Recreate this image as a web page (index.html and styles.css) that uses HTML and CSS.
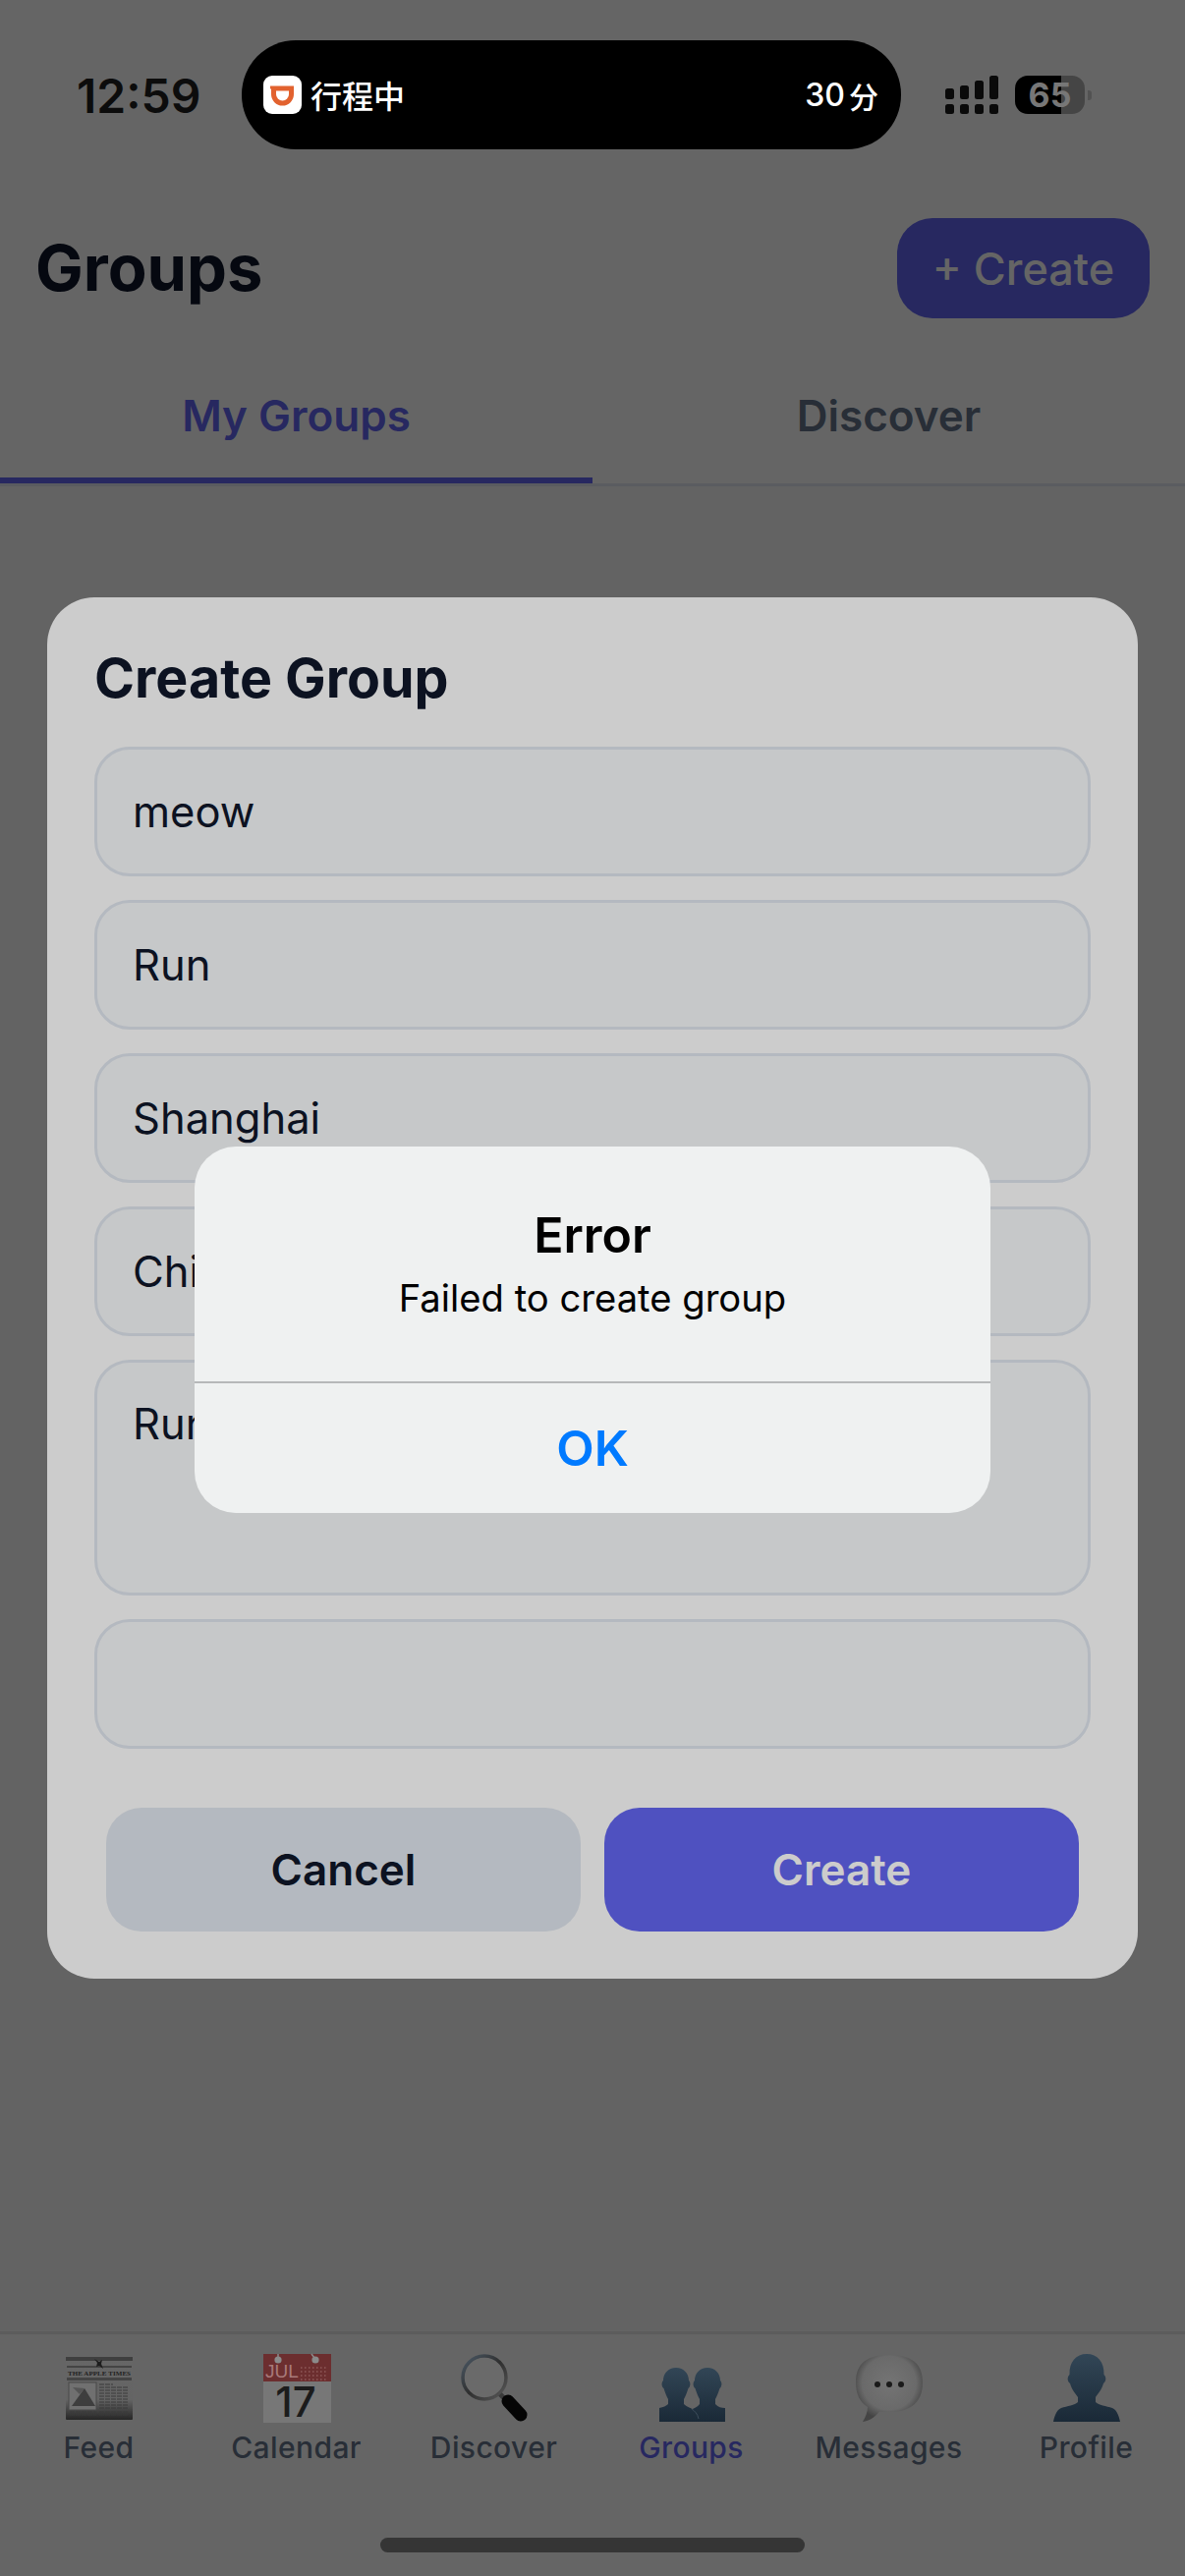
FILE: index.html
```html
<!DOCTYPE html>
<html lang="en">
<head>
<meta charset="utf-8">
<title>Groups</title>
<link rel="stylesheet" href="styles.css">
</head>
<body>
<div class="phone">
  <div class="screen">
    <header class="top">
      <div class="title-row">
        <h1 class="page-title">Groups</h1>
        <div class="add-btn">+ Create</div>
      </div>
      <div class="tabs">
        <div class="tab tab-on">My Groups</div>
        <div class="tab">Discover</div>
      </div>
    </header>
    <main class="content"></main>
    <nav class="nav">
      <div class="nav-item">
        <svg class="nav-icon" viewBox="0 0 72 72">
          <defs>
            <linearGradient id="paper" x1="0" y1="0" x2="0" y2="1">
              <stop offset="0" stop-color="#666666"/><stop offset=".68" stop-color="#646464"/><stop offset="1" stop-color="#262626"/>
            </linearGradient>
          </defs>
          <rect x="2" y="4" width="68" height="64" rx="1" fill="url(#paper)"/>
          <rect x="2" y="4" width="68" height="4" fill="#3f3f3f"/>
          <rect x="3" y="13" width="66" height="2" fill="#444444"/>
          <rect x="3" y="25" width="66" height="3" fill="#444444"/>
          <path d="M31 6l5 3 3-2-1 4 2 5-4-3-3 1 1-4z" fill="#1d1d1d"/>
          <text class="paper-head" x="36" y="23" text-anchor="middle" textLength="64">THE APPLE TIMES</text>
          <rect x="5" y="30" width="28" height="28" fill="#707070" stroke="#484848"/>
          <path d="M8 54 21 36l11 18z" fill="#3e3e3e"/>
          <path d="M9 35l12 1-5 6z" fill="#555"/>
          <g class="paper-lines">
            <path d="M36 32h14M36 35h30M36 38h30M36 41h30M36 44h30M36 47h30M36 50h30M36 53h30M36 56h30M6 60h27M36 60h30M6 63h27M36 63h30"/>
          </g>
        </svg>
        <span class="nav-label">Feed</span>
      </div>
      <div class="nav-item">
        <svg class="nav-icon" viewBox="0 0 72 72">
          <rect x="2" y="1" width="69" height="70" fill="#777777"/>
          <rect x="2" y="1" width="69" height="28" fill="#6c2e2f"/>
          <circle cx="17" cy="7" r="3.6" fill="#8b8b8b"/>
          <circle cx="55" cy="7" r="3.6" fill="#8b8b8b"/>
          <path d="M17 1v4M51 1l3 4" stroke="#8b8b8b" stroke-width="1.5"/>
          <text class="cal-month" x="4" y="25">JUL</text>
          <path class="cal-dots" d="M40 15h28M40 19h28M40 23h28M40 27h28"/>
          <text class="cal-day" x="35" y="65" text-anchor="middle">17</text>
        </svg>
        <span class="nav-label">Calendar</span>
      </div>
      <div class="nav-item">
        <svg class="nav-icon" viewBox="0 0 72 72">
          <defs>
            <linearGradient id="ring" x1="0" y1="0" x2="1" y2="1">
              <stop offset="0" stop-color="#4b5966"/><stop offset=".5" stop-color="#2f2f2f"/><stop offset="1" stop-color="#5a5a5a"/>
            </linearGradient>
          </defs>
          <circle cx="26" cy="25" r="22" fill="#6a6a6a" stroke="url(#ring)" stroke-width="3.5"/>
          <path d="M42 42l5 5" stroke="#3a3a3a" stroke-width="5"/>
          <path d="M50 49l13 14" stroke="#050505" stroke-width="13" stroke-linecap="round"/>
        </svg>
        <span class="nav-label">Discover</span>
      </div>
      <div class="nav-item">
        <svg class="nav-icon" viewBox="0 0 72 72">
          <defs>
            <linearGradient id="bust2" gradientUnits="userSpaceOnUse" x1="0" y1="15" x2="0" y2="70">
              <stop offset="0" stop-color="#324656"/><stop offset="1" stop-color="#1a2937"/>
            </linearGradient>
          </defs>
          <path fill="url(#bust2)" d="M20 15C28 15 33 21 33 28C35 30 35 34 32.500 36C31 41 29 45 28 47V52C31 55 36 56 38 58V70H3V56C7 55 10 54 12 52V47C11 45 9 41 7.500 36C5 34 5 30 7 28C7 21 12 15 20 15Z"/>
          <path fill="url(#bust2)" d="M52 15C60 15 65 21 65 28C67 30 67 34 64.500 36C63 41 61 45 60 47V52C63 55 66 56 70 56V70H35V58C38 56 42 55 44 52V47C43 45 41 41 39.500 36C37 34 37 30 39 28C39 21 44 15 52 15Z"/>
          <path d="M36 57c3 2 6 5 7 10" fill="none" stroke="#3d4e5c" stroke-width="1"/>
        </svg>
        <span class="nav-label nav-on">Groups</span>
      </div>
      <div class="nav-item">
        <svg class="nav-icon" viewBox="0 0 72 72">
          <defs>
            <radialGradient id="bubble" cx=".5" cy=".42" r=".56">
              <stop offset="0" stop-color="#747474"/><stop offset=".72" stop-color="#6a6a6a"/><stop offset="1" stop-color="#444444"/>
            </radialGradient>
          </defs>
          <path fill="url(#bubble)" d="M36 2C58 2 70 10 70 30C70 50 58 60 36 60C32 60 29 60 26 59.500C22 65 16 69 9 70C12 65 14 60 14 55C6 50 2 42 2 30C2 10 14 2 36 2Z"/>
          <circle cx="24" cy="32" r="3" fill="#1a1a1a"/>
          <circle cx="36" cy="32" r="3" fill="#1a1a1a"/>
          <circle cx="48" cy="32" r="3" fill="#1a1a1a"/>
        </svg>
        <span class="nav-label">Messages</span>
      </div>
      <div class="nav-item">
        <svg class="nav-icon" viewBox="0 0 72 72">
          <defs>
            <linearGradient id="bust1" x1="0" y1="0" x2="0" y2="1">
              <stop offset="0" stop-color="#324656"/><stop offset="1" stop-color="#1a2937"/>
            </linearGradient>
          </defs>
          <path fill="url(#bust1)" d="M36 1C47 1 54 9 53.500 22C56 24 56 29 53 31C51 38 47 42 45 45V50C48 53 56 54 62 56C67 58 69 65 70 70H2C3 65 5 58 10 56C16 54 24 53 27 50V45C25 42 21 38 19 31C16 29 16 24 18.500 22C18 9 25 1 36 1Z"/>
        </svg>
        <span class="nav-label">Profile</span>
      </div>
    </nav>
  </div>

  <div class="dim dim-modal">
    <section class="modal">
      <h2 class="modal-title">Create Group</h2>
      <div class="fields">
        <div class="field">meow</div>
        <div class="field">Run</div>
        <div class="field">Shanghai</div>
        <div class="field">China</div>
        <div class="field field-area">Running</div>
        <div class="field"></div>
      </div>
      <div class="actions">
        <div class="btn btn-cancel">Cancel</div>
        <div class="btn btn-create">Create</div>
      </div>
    </section>
  </div>

  <div class="dim dim-alert">
    <section class="alert">
      <div class="alert-body">
        <div class="alert-title">Error</div>
        <div class="alert-msg">Failed to create group</div>
      </div>
      <div class="alert-ok">OK</div>
    </section>
  </div>

  <div class="status">
    <span class="time">12:59</span>
    <div class="island">
      <div class="island-left">
        <svg class="didi" viewBox="0 0 39 39">
          <rect width="39" height="39" rx="9" fill="#fff"/>
          <path d="M7 10.500H31V19A11.500 11.500 0 0 1 8 19V13.500H7Z" fill="#e2622f"/>
          <path d="M13 15.500H26V19A6.500 6.500 0 0 1 13 19Z" fill="#fff"/>
        </svg>
        <span class="trip">行程中</span>
      </div>
      <div class="eta"><span class="eta-num">30</span><span class="eta-unit">分</span></div>
    </div>
    <svg class="signal" viewBox="0 0 54 39">
      <rect x="0" y="29" width="9" height="10" rx="2.500"/>
      <rect x="15" y="29" width="9" height="10" rx="2.500"/>
      <rect x="30" y="29" width="9" height="10" rx="2.500"/>
      <rect x="45" y="29" width="9" height="10" rx="2.500"/>
      <rect x="0" y="13" width="9" height="11" rx="2.500"/>
      <rect x="15" y="10" width="9" height="14" rx="2.500"/>
      <rect x="30" y="5" width="9" height="19" rx="2.500"/>
      <rect x="45" y="0" width="9" height="24" rx="2.500"/>
    </svg>
    <div class="battery"><span>65</span></div>
    <div class="battery-tip"></div>
  </div>
  <div class="home-bar"></div>
</div>
</body>
</html>
```
FILE: styles.css
```css
* { box-sizing: border-box; }
html, body { margin: 0; padding: 0; }
body { font-family: Inter, "Noto Sans", sans-serif; background: #666; }

.phone {
  position: relative;
  width: 1206px;
  height: 2622px;
  overflow: hidden;
}
.screen {
  width: 100%;
  height: 100%;
  display: flex;
  flex-direction: column;
  background: #f8f8f8;
}

/* Header */
.top { background: #fff; padding-top: 222px; }
.title-row {
  display: flex;
  justify-content: space-between;
  align-items: center;
  padding: 0 36px;
}
.page-title {
  margin: 0;
  font-size: 65px;
  font-weight: 700;
  line-height: 72px;
  color: #0f172a;
}
.add-btn {
  width: 257px;
  height: 102px;
  display: flex;
  align-items: center;
  justify-content: center;
  border-radius: 36px;
  background: #6366f1;
  color: #fff;
  font-size: 45px;
  font-weight: 500;
}
.tabs {
  display: flex;
  margin-top: 36px;
  border-bottom: 3px solid #e2e8f0;
}
.tab {
  flex: 1;
  height: 132px;
  display: flex;
  align-items: center;
  justify-content: center;
  border-bottom: 6px solid transparent;
  font-size: 44px;
  font-weight: 600;
  color: #64748b;
}
.tab-on { color: #6366f1; border-bottom-color: #6366f1; }

.content { flex: 1; }

/* Bottom nav */
.nav {
  height: 249px;
  padding-top: 19px;
  display: flex;
  background: #fff;
  border-top: 3px solid #e8e8e8;
}
.nav-item {
  flex: 1;
  display: flex;
  flex-direction: column;
  align-items: center;
}
.nav-icon {
  position: relative;
  z-index: 30;
  width: 72px;
  height: 72px;
  display: block;
}
.nav-label {
  margin-top: 6px;
  font-size: 30px;
  line-height: 36px;
  font-weight: 500;
  letter-spacing: .4px;
  color: #64748b;
}
.nav-on { color: #6366f1; }
.paper-head { font-family: "Liberation Serif", serif; font-size: 7px; font-weight: 700; fill: #222; }
.paper-lines path { stroke: #3a3a3a; stroke-width: 1.200; stroke-dasharray: 5 1; fill: none; }
.cal-month { font-family: "Liberation Sans", sans-serif; font-size: 19px; fill: #a87a7a; }
.cal-dots { stroke: #8f5a5a; stroke-width: 1.500; stroke-dasharray: 1.500 2.500; fill: none; }
.cal-day { font-family: Inter, sans-serif; font-size: 42px; font-weight: 500; fill: #1c1c1c; }

/* Dimming layers */
.dim {
  position: absolute;
  inset: 0;
  display: flex;
  align-items: center;
  justify-content: center;
}
.dim-modal { z-index: 10; background: rgba(0, 0, 0, .5); }
.dim-alert { z-index: 20; background: rgba(0, 0, 0, .2); padding-top: 85px; }

/* Create Group modal */
.modal {
  width: 1110px;
  padding: 48px;
  border-radius: 48px;
  background: #fff;
}
.modal-title {
  margin: 0 0 36px;
  font-size: 55.500px;
  line-height: 68px;
  font-weight: 700;
  color: #0f172a;
}
.fields { display: flex; flex-direction: column; gap: 24px; }
.field {
  height: 132px;
  padding: 0 36px;
  display: flex;
  align-items: center;
  border: 3px solid #e2e8f0;
  border-radius: 36px;
  background: #f8fafc;
  font-size: 43.500px;
  color: #0f172a;
}
.field-area { height: 240px; align-items: flex-start; padding-top: 36px; }
.actions { display: flex; gap: 24px; margin-top: 60px; padding: 0 12px; }
.btn {
  flex: 1;
  height: 126px;
  display: flex;
  align-items: center;
  justify-content: center;
  border-radius: 36px;
  font-size: 44px;
  font-weight: 600;
}
.btn-cancel { background: #e2e8f0; color: #0f172a; }
.btn-create { background: #6366f1; color: #fff; }

/* Error alert */
.alert {
  width: 810px;
  height: 373px;
  display: flex;
  flex-direction: column;
  border-radius: 42px;
  background: #eff1f1;
  overflow: hidden;
}
.alert-body {
  height: 241px;
  padding-top: 60px;
  border-bottom: 2px solid #b6b8b9;
  text-align: center;
  color: #000;
}
.alert-title { font-size: 50px; line-height: 60px; font-weight: 600; }
.alert-msg { margin-top: 9px; font-size: 38.200px; line-height: 50px; }
.alert-ok {
  flex: 1;
  display: flex;
  align-items: center;
  justify-content: center;
  font-size: 50px;
  font-weight: 600;
  color: #007aff;
}

/* System status */
.status {
  position: absolute;
  z-index: 40;
  top: 41px;
  left: 78px;
  display: flex;
  align-items: center;
  height: 111px;
}
.time {
  width: 126px;
  padding-top: 2px;
  font-size: 48px;
  font-weight: 600;
  color: #0c0c0c;
}
.island {
  width: 671px;
  height: 111px;
  margin-left: 42px;
  padding: 0 23px 0 22px;
  display: flex;
  align-items: center;
  justify-content: space-between;
  border-radius: 55px;
  background: #000;
  color: #fff;
  font-family: "Noto Sans CJK SC", sans-serif;
}
.island-left { display: flex; align-items: center; gap: 9px; }
.didi { width: 39px; height: 39px; display: block; }
.trip { font-size: 32px; font-weight: 500; line-height: 39px; }
.eta { display: flex; align-items: center; gap: 4px; }
.eta-num { font-family: Inter, sans-serif; font-size: 32px; font-weight: 500; }
.eta-unit { font-size: 30px; font-weight: 500; }
.signal { width: 54px; height: 39px; margin-left: 45px; fill: #0a0a0a; display: block; }
.battery {
  width: 71px;
  height: 39px;
  margin-left: 17px;
  display: flex;
  align-items: center;
  justify-content: center;
  border-radius: 13px;
  background: linear-gradient(90deg, #000 0 47px, #454545 47px);
  color: #777;
  font-size: 34px;
  font-weight: 700;
}
.battery-tip {
  width: 4px;
  height: 10px;
  margin-left: 3px;
  border-radius: 0 3px 3px 0;
  background: #525252;
}
.home-bar {
  position: absolute;
  z-index: 40;
  left: 387px;
  bottom: 24px;
  width: 432px;
  height: 15px;
  border-radius: 8px;
  background: #353535;
}
```
